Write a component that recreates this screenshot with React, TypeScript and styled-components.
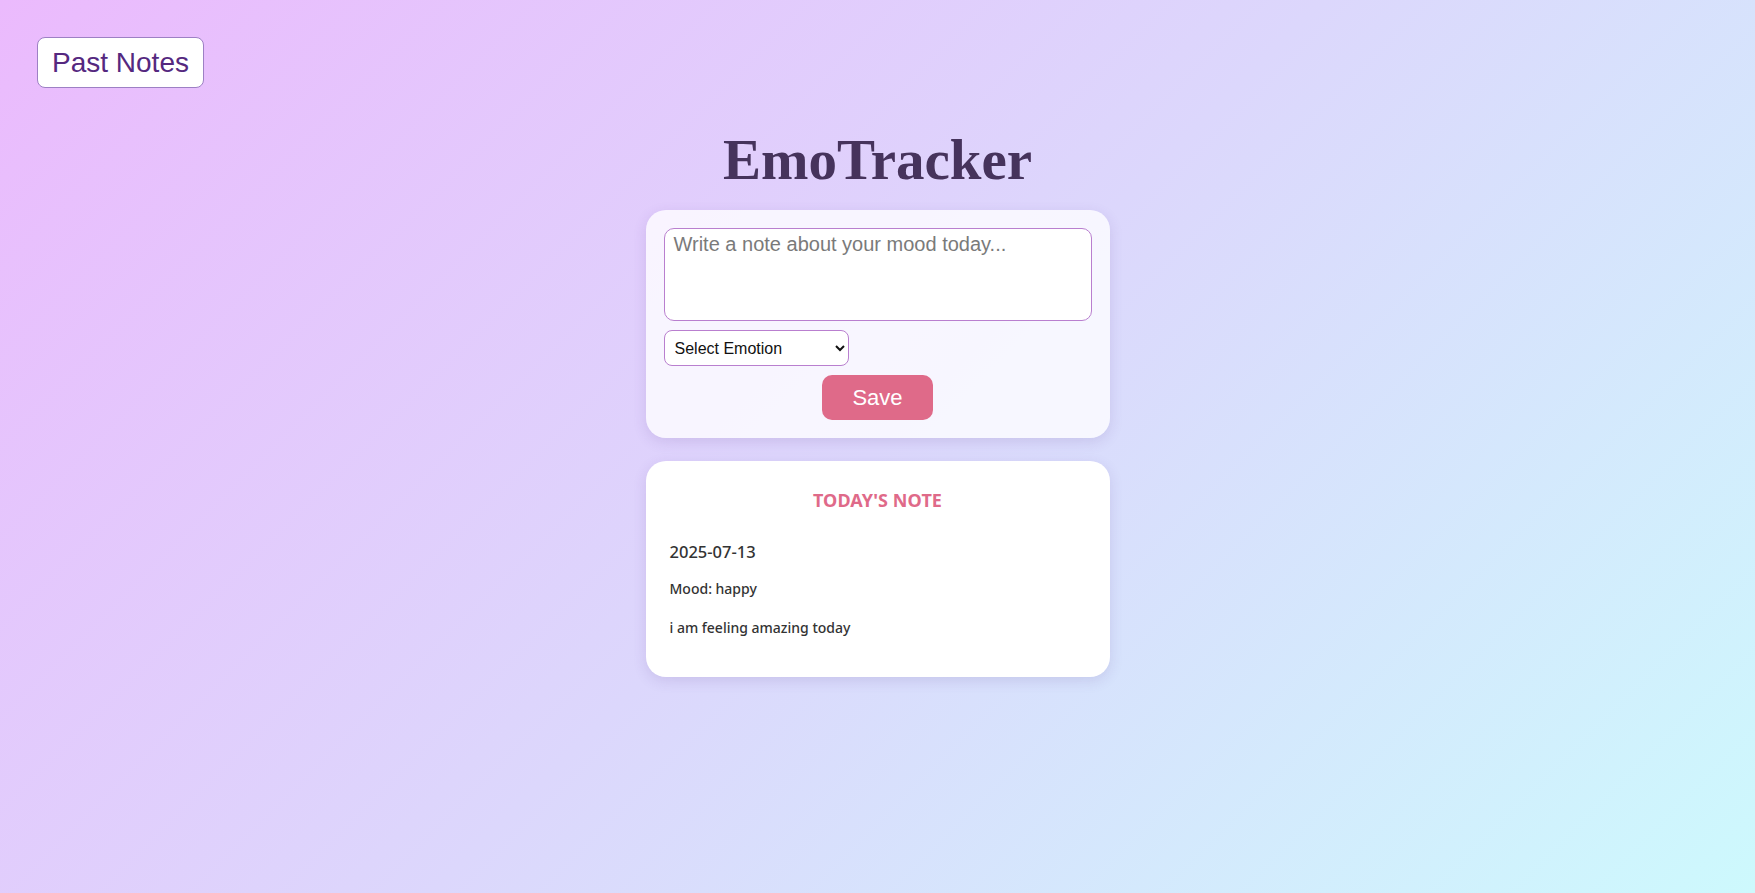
import React from "react";
import styled, { createGlobalStyle } from "styled-components";

const GlobalStyle = createGlobalStyle`
  html, body {
    margin: 0;
    padding: 0;
  }
  body {
    min-height: 100vh;
    background: linear-gradient(135deg, #ebbafd 0%, #dcd7fc 50%, #cdf9fd 100%);
    background-attachment: fixed;
    font-family: "Liberation Sans", Arial, sans-serif;
  }
  * { box-sizing: border-box; }
`;

const Page = styled.div`
  min-height: 100vh;
  padding: 37px 37px 40px;
  display: flex;
  flex-direction: column;
`;

const TopBar = styled.div`
  display: flex;
  justify-content: flex-start;
`;

const NavButton = styled.button`
  height: 51px;
  padding: 0 14px;
  background: #ffffff;
  border: 1px solid #9d80c4;
  border-radius: 8px;
  color: #55287f;
  font-family: "Liberation Sans", Arial, sans-serif;
  font-size: 28px;
  line-height: 32px;
  cursor: pointer;
`;

const Title = styled.h1`
  margin: 39px 0 0;
  text-align: center;
  font-family: "Liberation Serif", "Times New Roman", serif;
  font-weight: 700;
  font-size: 57px;
  line-height: 65px;
  color: #46335c;
`;

const Column = styled.main`
  width: 464px;
  margin: 18px auto 0;
  display: flex;
  flex-direction: column;
  gap: 23px;
`;

const Card = styled.section<{ $solid?: boolean }>`
  background: ${(p) => (p.$solid ? "#ffffff" : "rgba(255, 255, 255, 0.78)")};
  border-radius: 20px;
  box-shadow: 0 4px 14px rgba(90, 60, 140, 0.14);
`;

const FormCard = styled(Card)`
  padding: 18px;
  display: flex;
  flex-direction: column;
  gap: 9px;
`;

const NoteInput = styled.textarea`
  width: 100%;
  height: 93px;
  padding: 4px 9px;
  border: 1.5px solid #b97fcf;
  border-radius: 10px;
  background: #ffffff;
  font-family: "Liberation Sans", Arial, sans-serif;
  font-size: 20px;
  resize: none;
  outline: none;
  &::placeholder {
    color: #7a7a7a;
  }
`;

const EmotionSelect = styled.select`
  width: 185px;
  height: 36px;
  padding: 0 6px;
  border: 1.5px solid #b97fcf;
  border-radius: 8px;
  background: #ffffff;
  color: #111;
  font-family: "Liberation Sans", Arial, sans-serif;
  font-size: 16px;
  outline: none;
`;

const SaveButton = styled.button`
  align-self: center;
  width: 111px;
  height: 45px;
  border: none;
  border-radius: 10px;
  background: #df6a89;
  color: #ffffff;
  font-family: "Liberation Sans", Arial, sans-serif;
  font-size: 22px;
  cursor: pointer;
`;

const NoteCard = styled(Card)`
  padding: 27px 24px 40px;
  display: flex;
  flex-direction: column;
  font-family: "Noto Sans", "Open Sans", sans-serif;
  color: #333333;
`;

const NoteHeading = styled.h2`
  margin: 0;
  text-align: center;
  color: #df6a89;
  font-size: 18px;
  line-height: 24px;
  font-weight: 700;
  letter-spacing: 0.1px;
`;

const NoteText = styled.p<{ $size: number; $gap: number; $weight?: number }>`
  margin: ${(p) => p.$gap}px 0 0;
  font-size: ${(p) => p.$size}px;
  line-height: ${(p) => Math.round(p.$size * 1.33)}px;
  font-weight: ${(p) => p.$weight ?? 500};
`;

export default function App() {
  return (
    <>
      <GlobalStyle />
      <Page>
        <TopBar>
          <NavButton>Past Notes</NavButton>
        </TopBar>
        <Title>EmoTracker</Title>
        <Column>
          <FormCard>
            <NoteInput placeholder="Write a note about your mood today..." />
            <EmotionSelect defaultValue="">
              <option value="">Select Emotion</option>
              <option value="happy">Happy</option>
              <option value="sad">Sad</option>
              <option value="angry">Angry</option>
              <option value="anxious">Anxious</option>
            </EmotionSelect>
            <SaveButton>Save</SaveButton>
          </FormCard>
          <NoteCard $solid>
            <NoteHeading>TODAY'S NOTE</NoteHeading>
            <NoteText $size={16.5} $gap={29} $weight={500}>2025-07-13</NoteText>
            <NoteText $size={14} $gap={16}>Mood: happy</NoteText>
            <NoteText $size={14} $gap={20}>i am feeling amazing today</NoteText>
          </NoteCard>
        </Column>
      </Page>
    </>
  );
}
